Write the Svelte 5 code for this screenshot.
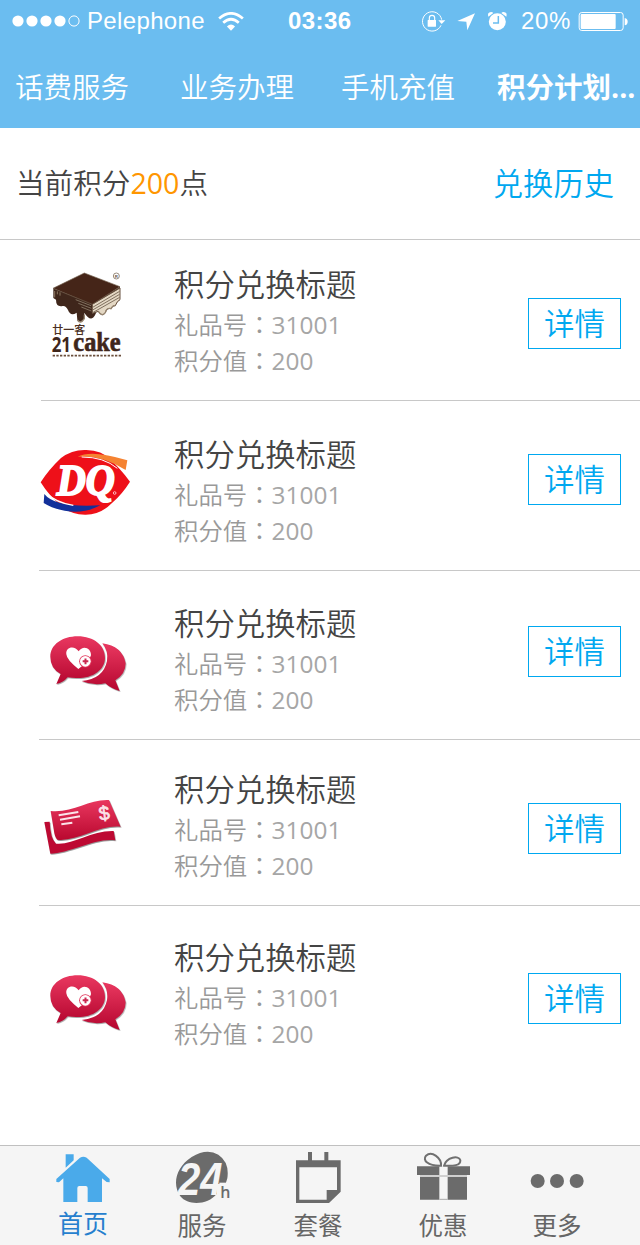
<script>
  const tabs = ['话费服务', '业务办理', '手机充值', '积分计划...'];
  const rows = ['cake', 'dq', 'chat', 'card', 'chat'];
  const nav = [
    { id: 'home', label: '首页', box: '99 48 300 180' },
    { id: 'service', label: '服务', box: '456 48 300 180' },
    { id: 'plan', label: '套餐', box: '54 48 300 180' },
    { id: 'gift', label: '优惠', box: '429 48 300 180' },
    { id: 'more', label: '更多', box: '81 48 300 180' }
  ];
</script>

<div class="page">
  <header>
    <div class="status">
      <svg class="dots" viewBox="0 0 70 14">
        <circle cx="6" cy="7" r="5.6" /><circle cx="20" cy="7" r="5.6" /><circle cx="34" cy="7" r="5.6" /><circle cx="48" cy="7" r="5.6" />
        <circle cx="62" cy="7" r="5.1" fill="none" stroke="#fff" />
      </svg>
      <span class="carrier">Pelephone</span>
      <svg class="wifi" viewBox="0 0 76 56" fill="none" stroke="#fff" stroke-width="8">
        <path d="M3 19Q38 -11 73 19" /><path d="M15 32Q38 11 61 32" />
        <path d="M26 43Q38 31 50 43L38 55Z" fill="#fff" stroke="none" />
      </svg>
      <span class="time">03:36</span>
      <svg class="marks" viewBox="300 24 270 72">
        <path d="M363 73A29 29 0 1 1 365 56" fill="none" stroke="#fff" stroke-width="3" />
        <path d="M355 58H376L365 69Z" /><rect x="323" y="57" width="25" height="20" rx="1" />
        <path d="M328 58V51Q328 43 336 43Q344 43 344 51V58" fill="none" stroke="#fff" stroke-width="3.5" />
        <path d="M465 37L412 60L439 62L442 88Z" />
        <circle cx="532" cy="62" r="25.5" />
        <path d="M505 47Q501 34 513 33Q518 33 520 36ZM559 47Q563 34 551 33Q546 33 544 36Z" />
        <path d="M535 45V66H519" fill="none" stroke="#6bbdf0" stroke-width="4.5" />
      </svg>
      <span class="percent">20%</span>
      <svg class="battery" viewBox="775 30 150 63">
        <rect x="778.5" y="34.5" width="132" height="54" rx="8" fill="none" stroke="#fff" stroke-width="3" />
        <rect x="783" y="39" width="105" height="45" rx="3" /><path d="M915 51Q924 53 924 62Q924 71 915 73Z" />
      </svg>
    </div>
    <nav class="top">
      {#each tabs as tab, i}<span class:active={i === 3}>{tab}</span>{/each}
    </nav>
  </header>

  <section class="summary">
    <div>当前积分<b>200</b>点</div>
    <span class="history">兑换历史</span>
  </section>

  <main>
    {#each rows as kind}
      <article>
        <div class="logo {kind}">
          {#if kind === 'cake'}
            <svg width="110" height="110" viewBox="0 0 330 330">
              <path d="M70 85L187 130L270 80V119Q261 123 256 137Q248 135 243 146Q230 142 226 158Q216 172 205 154L200 154Q194 172 186 175Q175 178 163 158V176Q152 194 142 180L140 158Q121 170 114 150Q107 136 98 138Q78 142 78 119L70 114Z" fill="#3f261b" />
              <path d="M187 133L270 84V119Q261 123 256 137Q248 135 243 146Q230 142 226 158Q216 172 205 154L187 160Z" fill="#e4d8c4" stroke="#67503e" stroke-width="3" />
              <path d="M188 142L269 94M188 150L269 103M188 158L269 112M137 119L183 137M145 130L184 145M154 141L184 153" stroke="#80705e" stroke-width="3" />
              <path d="M74 93V112M82 94V103M90 97V107" stroke="#8a7660" stroke-width="3" />
              <path d="M163 39L270 80L187 133L69 85Z" fill="#452518" stroke="#756451" stroke-width="2" />
              <path d="M142 180Q152 194 163 176V164M205 154Q216 172 226 158Q230 142 243 146Q248 135 256 137" fill="none" stroke="#968570" stroke-width="4" />
              <circle cx="259" cy="48" r="9" fill="none" stroke="#988c7f" stroke-width="3" />
              <text x="254" y="53" class="reg" fill="#66584c">R</text>
              <text x="67" y="222" class="cn" textLength="99">廿一客</text>
              <text x="65" y="275" class="num" textLength="58" lengthAdjust="spacingAndGlyphs">21</text>
              <text x="130" y="274" class="word" textLength="142" lengthAdjust="spacingAndGlyphs">cake</text>
              <path d="M68 287H273" stroke="#6b4f3c" stroke-width="5" stroke-dasharray="7 4" />
            </svg>
          {:else if kind === 'dq'}
            <svg width="110" height="100" viewBox="0 0 330 300">
              <path d="M32 142Q56 104 93 69Q127 43 169 45Q216 46 240 73Q269 99 300 140Q277 177 246 204Q211 240 165 239Q119 238 91 211Q57 182 32 142Z" fill="#ee1019" />
              <path d="M143 65Q185 43 292 76L287 105Q215 59 143 65Z" fill="#f58332" />
              <path d="M155 66Q222 66 262 100" fill="none" stroke="#fff" stroke-width="3" />
              <path d="M43 177Q76 219 211 211Q160 238 104 227Q68 221 41 204Z" fill="#12309a" />
              <path d="M49 174Q79 204 130 211" fill="none" stroke="#fff" stroke-width="4" />
              <text x="80" y="181" class="dqtext" textLength="174" lengthAdjust="spacingAndGlyphs">DQ</text>
              <circle cx="254" cy="174" r="4" fill="none" stroke="#fff" stroke-width="2" />
            </svg>
          {:else if kind === 'chat'}
            <svg width="110" height="90" viewBox="0 0 330 270">
              <defs><linearGradient id="red" x1="0" y1="0" x2="0" y2="1"><stop stop-color="#e93860" /><stop offset="1" stop-color="#b5062f" /></linearGradient></defs>
              <g filter="drop-shadow(2px 3px 2px #aaa)">
                <path d="M202 70Q262 78 272 130Q272 162 241 181L254 213Q227 205 211 190Q174 198 140 183Q205 177 216 123Q221 94 202 70Z" fill="url(#red)" />
                <path d="M128 49C177 49 210 77 210 113C210 151 171 176 123 174Q110 174 98 172Q86 187 64 192L77 162Q46 145 46 110C46 74 82 49 128 49Z" fill="url(#red)" />
              </g>
              <path d="M130 147Q95 119 94 103C91 80 119 75 131 94C143 74 169 83 168 106Q164 123 130 147Z" fill="#fff" />
              <circle cx="151" cy="124" r="18.5" fill="#e4385e" /><circle cx="151" cy="124" r="16" fill="#fff" />
              <path d="M143 124H160M151.500 115.500V132.500" stroke="#c92950" stroke-width="6" />
            </svg>
          {:else}
            <svg width="110" height="90" viewBox="0 0 330 270">
              <defs><linearGradient id="red2" x1="0" y1="0" x2="0" y2="1"><stop stop-color="#e9375f" /><stop offset="1" stop-color="#b9082f" /></linearGradient></defs>
              <g fill="url(#red2)" filter="drop-shadow(2px 3px 2px #999)">
                <path d="M28 111L44 110Q46 160 63 176C111 182 168 136 236 138L241 166C187 156 105 204 46 206Z" fill="#bd0932" />
                <path d="M47 78C112 85 161 42 222 45L257 125C194 118 125 171 67 164Q59 157 56 132Z" />
              </g>
              <path d="M71 91L130 81M75 104L135 94M79 118L112 113" stroke="#fbe3e9" stroke-width="6" />
              <text x="191" y="104" class="dollar" transform="rotate(-8 208 84)">$</text>
            </svg>
          {/if}
        </div>
        <div class="info">
          <h2>积分兑换标题</h2>
          <p>礼品号<i>：</i><b>31001</b></p>
          <p>积分值<i>：</i><b>200</b></p>
        </div>
        <button>详情</button>
      </article>
    {/each}
  </main>

  <footer>
    {#each nav as item}
      <div class="item {item.id}">
        <svg width="100" height="60" viewBox={item.box}>
          {#if item.id === 'home'}
            <path d="M197 73H221V91L197 113ZM240 83Q250 77 260 83L329 147V157L320 156L306 145V216H263V174Q263 168 257 168H238Q232 168 232 174V216H190V145L177 157L169 156V147Z" />
          {:else if item.id === 'service'}
            <path d="M682 145Q689 97 655 74Q620 54 575 81C527 112 516 164 541 199C565 229 625 224 650 192V173H670Q679 160 682 145Z" />
            <path d="M658 158H690V208H658Z" fill="#f5f5f5" />
            <text x="534" y="194" class="day" textLength="134" lengthAdjust="spacingAndGlyphs">24</text>
            <text x="661" y="203" class="hour">h</text>
          {:else if item.id === 'plan'}
            <path fill-rule="evenodd" d="M138 91H174V66H186V91H223V66H235V91H272V185L237 219H138ZM148 112V209H230V180H261V112Z" />
          {:else if item.id === 'gift'}
            <path d="M501 109H568V135H501ZM593 109H660V135H593ZM510 141H568V209H510ZM593 141H651V209H593Z" />
            <path d="M510 138H651M568 208H593" stroke="#aaa" stroke-width="3" />
            <path d="M573 107C533 108 517 91 528 77C546 61 575 85 573 107ZM582 107C589 82 627 74 631 91C632 106 611 109 582 107Z" fill="none" stroke="#707070" stroke-width="6" />
          {:else}
            <circle cx="173" cy="153" r="21" /><circle cx="231" cy="153" r="21" /><circle cx="290" cy="153" r="21" />
          {/if}
        </svg>
        <span>{item.label}</span>
      </div>
    {/each}
  </footer>
</div>

<style>
  :global(body) { margin: 0; background: #fff; }
  .page { width: 640px; height: 1245px; display: flex; flex-direction: column; overflow: hidden; font-family: 'Open Sans', 'Noto Sans CJK SC', sans-serif; font-weight: 350; color: #444; }
  header { height: 128px; background: #6bbdf0; color: #fff; flex: none; }
  svg { display: block; flex: none; }
  .status { height: 42px; display: flex; align-items: center; fill: #fff; font-family: 'Liberation Sans', sans-serif; font-weight: 400; font-size: 24px; line-height: 42px; white-space: nowrap; }
  .dots { width: 70px; height: 14px; margin-left: 12px; }
  .carrier { width: 125px; margin-left: 5px; letter-spacing: .35px; }
  .wifi { width: 26px; height: 19px; margin-left: 6px; }
  .time { width: 66px; margin-left: 44px; font-weight: 700; letter-spacing: .4px; }
  .marks { width: 90px; height: 24px; margin-left: 66px; margin-top: -1px; }
  .percent { width: 54px; margin-left: 11px; letter-spacing: .7px; }
  .battery { width: 50px; height: 21px; margin-left: 3px; }
  .top { display: flex; height: 86px; line-height: 90px; font-size: 28.5px; white-space: nowrap; }
  .top span { width: 161px; }
  .top span:first-child { margin-left: 15px; width: 165px; }
  .top span:nth-child(3) { width: 156px; }
  .top .active { width: 143px; font-weight: 700; }
  .summary { box-sizing: border-box; height: 112px; padding: 0 26px 0 16px; border-bottom: 1px solid #c8c8c8; display: flex; justify-content: space-between; line-height: 110px; font-size: 28.6px; flex: none; }
  .summary b { color: #ff9600; font-weight: 400; }
  .history { color: #00a8f0; font-size: 30.3px; line-height: 112px; }
  main { height: 905px; flex: none; }
  article { box-sizing: border-box; height: 170px; display: grid; grid-template-columns: 135px 354px 93px; padding-left: 39px; align-items: start; background: linear-gradient(#c8c8c8, #c8c8c8) 39px 100% / 601px 1px no-repeat; }
  article:nth-child(1) { height: 161px; background-position-x: 41px; }
  article:nth-child(3) { height: 169px; }
  article:nth-child(4) { height: 166px; }
  article:nth-child(5) { background: none; }
  .logo { margin-left: -4px; margin-top: 49px; }
  .logo.cake { margin: 20px 0 0 -9px; }
  .logo.dq { margin: 34px 0 0 -9px; }
  .logo.card { margin-top: 45px; }
  article:nth-child(5) .logo { margin-top: 53px; }
  .info { margin-top: 33px; }
  article:nth-child(1) .info { margin-top: 24px; }
  article:nth-child(3) .info { margin-top: 32px; }
  article:nth-child(4) .info { margin-top: 29px; }
  article:nth-child(5) .info { margin-top: 31px; }
  h2 { margin: 0; font-size: 30.4px; line-height: 42px; font-weight: 350; }
  p { margin: 0; font-size: 24.4px; line-height: 36px; height: 36px; color: #999; }
  p i { font-style: normal; font-family: 'Noto Sans CJK TC', sans-serif; }
  p b { font-weight: 400; color: #a6a6a6; }
  button { box-sizing: border-box; width: 93px; height: 51px; margin: 53px 0 0; padding: 0 0 3px; border: 1px solid #00a8f0; background: #fff; color: #00a8f0; font: 350 30.5px/46px 'Noto Sans CJK SC', sans-serif; }
  article:nth-child(1) button { margin-top: 58px; }
  article:nth-child(3) button { margin-top: 55px; }
  article:nth-child(4) button { margin-top: 63px; }
  article:nth-child(5) button { margin-top: 67px; }
  .reg { font: 700 13px 'Liberation Sans', sans-serif; }
  .cn { font: 500 33px 'Noto Sans CJK SC', sans-serif; fill: #4b3022; }
  .num { font: 700 62px 'Open Sans', sans-serif; fill: #3f261b; }
  .word { font: 700 82px 'Liberation Serif', serif; fill: #3f261b; stroke: #3f261b; stroke-width: 2; }
  .dqtext { font: italic 700 132px 'Liberation Serif', serif; fill: #fff; stroke: #fff; stroke-width: 6; }
  .dollar { font: 400 58px 'Liberation Sans', sans-serif; fill: #fbe3e9; stroke: #fbe3e9; stroke-width: 2; }
  footer { box-sizing: border-box; height: 100px; border-top: 1px solid #c0c0c0; background: #f5f5f5; display: flex; fill: #6b6b6b; color: #666; font-weight: 400; font-size: 24.5px; flex: none; }
  .item { width: 100px; margin-left: 19px; text-align: center; }
  .item span { display: block; line-height: 40px; }
  .home { margin-left: 33px; fill: #4aaaea; color: #267fce; }
  .home span { font-size: 25px; line-height: 35px; }
  .plan { margin-left: 16px; }
  .gift { margin-left: 25px; }
  .more { margin-left: 14px; }
  .day { font: italic 700 138px 'Liberation Sans', sans-serif; fill: #f5f5f5; }
  .hour { font: 600 48px 'Open Sans', sans-serif; }
</style>
